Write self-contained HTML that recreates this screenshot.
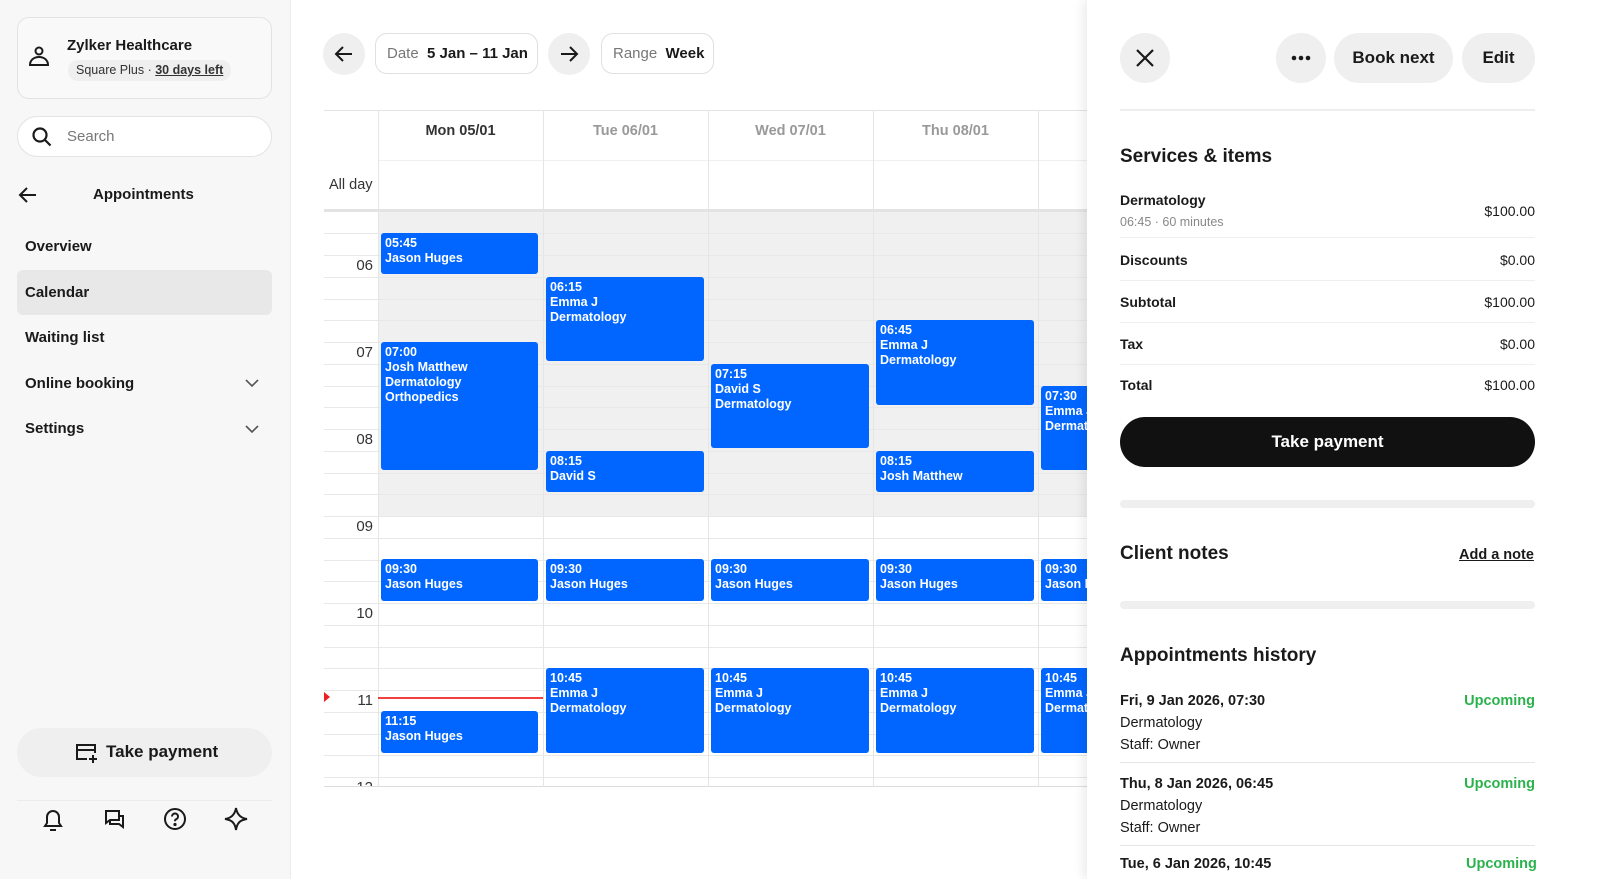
<!DOCTYPE html>
<html><head><meta charset="utf-8"><style>
*{box-sizing:border-box;margin:0;padding:0}
body{width:1600px;height:879px;overflow:hidden;font-family:"Liberation Sans",sans-serif;color:#1a1a1a;background:#fff;position:relative}
.abs{position:absolute}
.side{left:0;top:0;width:291px;height:879px;background:#f7f7f7;border-right:1px solid #ececec}
.card{left:17px;top:17px;width:255px;height:82px;border:1px solid #e3e3e3;border-radius:12px;background:#f9f9f9}
.nav{left:25px;font-size:15px;font-weight:bold;color:#1a1a1a}
.blk{position:absolute;background:#0066ff;color:#fff;border-radius:3px;font-size:12.5px;font-weight:bold;line-height:15px;padding:3px 4px;overflow:hidden;white-space:nowrap}
.hl{position:absolute;height:1px;background:#e8e8e8}
.lbl{position:absolute;left:324px;width:49px;text-align:right;font-size:15px;color:#333}
.dh{position:absolute;top:123px;width:165px;text-align:center;font-size:14.5px;font-weight:bold;color:#999}
.pill{position:absolute;border:1px solid #e0e0e0;border-radius:12px;height:41px;top:33px;font-size:15px;line-height:39px;padding:0 11px;white-space:nowrap}
.circ{position:absolute;border-radius:50%;background:#efefef}
.row{position:absolute;left:1120px;width:415px;font-size:14px;border-bottom:1px solid #efefef}
.row b{position:absolute;left:0}
.row span{position:absolute;right:0}
</style></head><body>

<div class="abs side"></div>
<div class="abs card"></div>
<svg class="abs" style="left:27px;top:44px" width="24" height="26" viewBox="0 0 24 26" fill="none" stroke="#1a1a1a" stroke-width="2"><circle cx="12" cy="7" r="3.5"/><path d="M3 21c0-5 4-8 9-8s9 3 9 8H3z"/></svg>
<div class="abs" style="left:67px;top:37px;font-size:15px;font-weight:bold">Zylker Healthcare</div>
<div class="abs" style="left:68px;top:60px;height:21px;padding:0 8px;background:#efefef;border-radius:10px;font-size:12.5px;line-height:21px;color:#333;white-space:nowrap">Square Plus · <u style="font-weight:bold">30 days left</u></div>
<div class="abs" style="left:17px;top:116px;width:255px;height:41px;border:1px solid #e3e3e3;border-radius:21px;background:#fff"></div>
<svg class="abs" style="left:31px;top:126px" width="22" height="22" viewBox="0 0 22 22" fill="none" stroke="#1a1a1a" stroke-width="2.2"><circle cx="9" cy="9" r="6.5"/><path d="M14 14l5.5 5.5"/></svg>
<div class="abs" style="left:67px;top:128px;font-size:15px;color:#777">Search</div>
<svg class="abs" style="left:18px;top:185px" width="20" height="20" viewBox="0 0 20 20" fill="none" stroke="#1a1a1a" stroke-width="2"><path d="M18 10H3M9 3l-7 7 7 7"/></svg>
<div class="abs" style="left:93px;top:186px;font-size:15px;font-weight:bold">Appointments</div>
<div class="abs" style="left:17px;top:270px;width:255px;height:45px;background:#e8e8e8;border-radius:6px"></div>
<div class="abs nav" style="top:238px">Overview</div>
<div class="abs nav" style="top:284px">Calendar</div>
<div class="abs nav" style="top:329px">Waiting list</div>
<div class="abs nav" style="top:375px">Online booking</div>
<div class="abs nav" style="top:420px">Settings</div>
<svg class="abs" style="left:244px;top:377px" width="16" height="12" viewBox="0 0 16 12" fill="none" stroke="#555" stroke-width="1.6"><path d="M2 3l6 6 6-6"/></svg>
<svg class="abs" style="left:244px;top:423px" width="16" height="12" viewBox="0 0 16 12" fill="none" stroke="#555" stroke-width="1.6"><path d="M2 3l6 6 6-6"/></svg>
<div class="abs" style="left:17px;top:728px;width:255px;height:49px;background:#efefef;border-radius:25px"></div>
<svg class="abs" style="left:74px;top:741px" width="24" height="24" viewBox="0 0 24 24" fill="none" stroke="#1a1a1a" stroke-width="2"><path d="M13 18H3V4h18v8M3 9h18M19 14v8M15 18h8"/></svg>
<div class="abs" style="left:106px;top:742px;font-size:17px;font-weight:bold">Take payment</div>
<div class="abs" style="left:17px;top:800px;width:255px;height:1px;background:#ececec"></div>
<svg class="abs" style="left:41px;top:807px" width="24" height="26" viewBox="0 0 24 26" fill="none" stroke="#1a1a1a" stroke-width="2"><path d="M4 19h16l-2-3V10a6 6 0 0 0-12 0v6zM9 23h6"/></svg>
<svg class="abs" style="left:101px;top:807px" width="26" height="26" viewBox="0 0 26 26" fill="none" stroke="#1a1a1a" stroke-width="2"><path d="M4 4h14v9H9l-4 3V4zM9 13v4h9l4 3v-11h-4"/></svg>
<svg class="abs" style="left:163px;top:807px" width="24" height="24" viewBox="0 0 24 24" fill="none" stroke="#1a1a1a" stroke-width="2"><circle cx="12" cy="12" r="10"/><path d="M9 9.5a3 3 0 1 1 4 2.8c-.8.4-1 1-1 2"/><circle cx="12" cy="17.5" r=".6" fill="#1a1a1a"/></svg>
<svg class="abs" style="left:224px;top:807px" width="24" height="24" viewBox="0 0 24 24" fill="none" stroke="#1a1a1a" stroke-width="2"><path d="M12 1c1 6 4 10 11 11-7 1-10 4-11 11-1-7-4-10-11-11 7-1 10-5 11-11z"/></svg>

<!-- top bar -->
<div class="circ" style="left:323px;top:33px;width:42px;height:42px"></div>
<svg class="abs" style="left:334px;top:44px" width="20" height="20" viewBox="0 0 20 20" fill="none" stroke="#1a1a1a" stroke-width="2"><path d="M18 10H3M9 3l-7 7 7 7"/></svg>
<div class="pill" style="left:375px;width:163px"><span style="color:#777">Date</span>&nbsp; <b>5 Jan – 11 Jan</b></div>
<div class="circ" style="left:548px;top:33px;width:42px;height:42px"></div>
<svg class="abs" style="left:559px;top:44px" width="20" height="20" viewBox="0 0 20 20" fill="none" stroke="#1a1a1a" stroke-width="2"><path d="M2 10h15M11 3l7 7-7 7"/></svg>
<div class="pill" style="left:601px;width:113px"><span style="color:#777">Range</span>&nbsp; <b>Week</b></div>

<!-- calendar -->
<div class="abs" style="left:378px;top:212px;width:720px;height:304px;background:#f0f0f0"></div>
<div class="hl" style="left:324px;top:110px;width:770px;background:#e3e3e3"></div>
<div class="hl" style="left:378px;top:160px;width:720px;background:#f0f0f0"></div>
<div class="abs" style="left:324px;top:209px;width:770px;height:3px;background:#e3e3e3"></div>
<div class="hl" style="left:324px;top:786px;width:770px;background:#ddd"></div>
<div style="position:absolute;left:324px;top:0">
<div class="hl" style="left:0;top:233px;width:770px"></div><div class="hl" style="left:0;top:255px;width:770px"></div><div class="hl" style="left:0;top:277px;width:770px"></div><div class="hl" style="left:0;top:299px;width:770px"></div><div class="hl" style="left:0;top:320px;width:770px"></div><div class="hl" style="left:0;top:342px;width:770px"></div><div class="hl" style="left:0;top:364px;width:770px"></div><div class="hl" style="left:0;top:386px;width:770px"></div><div class="hl" style="left:0;top:407px;width:770px"></div><div class="hl" style="left:0;top:429px;width:770px"></div><div class="hl" style="left:0;top:451px;width:770px"></div><div class="hl" style="left:0;top:473px;width:770px"></div><div class="hl" style="left:0;top:494px;width:770px"></div><div class="hl" style="left:0;top:516px;width:770px"></div><div class="hl" style="left:0;top:538px;width:770px"></div><div class="hl" style="left:0;top:560px;width:770px"></div><div class="hl" style="left:0;top:581px;width:770px"></div><div class="hl" style="left:0;top:603px;width:770px"></div><div class="hl" style="left:0;top:625px;width:770px"></div><div class="hl" style="left:0;top:647px;width:770px"></div><div class="hl" style="left:0;top:668px;width:770px"></div><div class="hl" style="left:0;top:690px;width:770px"></div><div class="hl" style="left:0;top:712px;width:770px"></div><div class="hl" style="left:0;top:734px;width:770px"></div><div class="hl" style="left:0;top:755px;width:770px"></div><div class="hl" style="left:0;top:777px;width:770px"></div>
</div>
<div class="abs" style="left:378px;top:110px;width:1px;height:677px;background:#e5e5e5"></div>
<div class="abs" style="left:543px;top:110px;width:1px;height:677px;background:#e5e5e5"></div>
<div class="abs" style="left:708px;top:110px;width:1px;height:677px;background:#e5e5e5"></div>
<div class="abs" style="left:873px;top:110px;width:1px;height:677px;background:#e5e5e5"></div>
<div class="abs" style="left:1038px;top:110px;width:1px;height:677px;background:#e5e5e5"></div>
<div class="dh" style="left:378px;color:#333">Mon 05/01</div>
<div class="dh" style="left:543px">Tue 06/01</div>
<div class="dh" style="left:708px">Wed 07/01</div>
<div class="dh" style="left:873px">Thu 08/01</div>
<div class="abs" style="left:329px;top:177px;font-size:14.5px;color:#333">All day</div>
<div class="lbl" style="top:257px">06</div>
<div class="lbl" style="top:344px">07</div>
<div class="lbl" style="top:431px">08</div>
<div class="lbl" style="top:518px">09</div>
<div class="lbl" style="top:605px">10</div>
<div class="lbl" style="top:692px">11</div>
<div class="lbl" style="top:779px;height:7px;overflow:hidden">12</div>
<div class="abs" style="left:378px;top:697px;width:165px;height:1.5px;background:#f04040"></div>
<div class="abs" style="left:324px;top:692px;width:0;height:0;border-top:5px solid transparent;border-bottom:5px solid transparent;border-left:6px solid #f02020"></div>

<div class="blk" style="left:381px;top:233px;width:157px;height:41px">05:45<br>Jason Huges</div>
<div class="blk" style="left:381px;top:342px;width:157px;height:128px">07:00<br>Josh Matthew<br>Dermatology<br>Orthopedics</div>
<div class="blk" style="left:381px;top:559px;width:157px;height:42px">09:30<br>Jason Huges</div>
<div class="blk" style="left:381px;top:711px;width:157px;height:42px">11:15<br>Jason Huges</div>
<div class="blk" style="left:546px;top:277px;width:158px;height:84px">06:15<br>Emma J<br>Dermatology</div>
<div class="blk" style="left:546px;top:451px;width:158px;height:41px">08:15<br>David S</div>
<div class="blk" style="left:546px;top:559px;width:158px;height:42px">09:30<br>Jason Huges</div>
<div class="blk" style="left:546px;top:668px;width:158px;height:85px">10:45<br>Emma J<br>Dermatology</div>
<div class="blk" style="left:711px;top:364px;width:158px;height:84px">07:15<br>David S<br>Dermatology</div>
<div class="blk" style="left:711px;top:559px;width:158px;height:42px">09:30<br>Jason Huges</div>
<div class="blk" style="left:711px;top:668px;width:158px;height:85px">10:45<br>Emma J<br>Dermatology</div>
<div class="blk" style="left:876px;top:320px;width:158px;height:85px">06:45<br>Emma J<br>Dermatology</div>
<div class="blk" style="left:876px;top:451px;width:158px;height:41px">08:15<br>Josh Matthew</div>
<div class="blk" style="left:876px;top:559px;width:158px;height:42px">09:30<br>Jason Huges</div>
<div class="blk" style="left:876px;top:668px;width:158px;height:85px">10:45<br>Emma J<br>Dermatology</div>
<div class="blk" style="left:1041px;top:386px;width:158px;height:84px">07:30<br>Emma J<br>Dermatology</div>
<div class="blk" style="left:1041px;top:559px;width:158px;height:42px">09:30<br>Jason Huges</div>
<div class="blk" style="left:1041px;top:668px;width:158px;height:85px">10:45<br>Emma J<br>Dermatology</div>

<!-- panel -->
<div class="abs" style="left:1087px;top:0;width:513px;height:879px;background:#fff;box-shadow:-4px 0 10px rgba(0,0,0,.08)"></div>
<div class="circ" style="left:1120px;top:33px;width:50px;height:50px"></div>
<svg class="abs" style="left:1134px;top:47px" width="22" height="22" viewBox="0 0 22 22" fill="none" stroke="#1a1a1a" stroke-width="2.2"><path d="M3 3l16 16M19 3L3 19"/></svg>
<div class="circ" style="left:1276px;top:33px;width:50px;height:50px"></div>
<svg class="abs" style="left:1289px;top:54px" width="24" height="8" viewBox="0 0 24 8" fill="#1a1a1a"><circle cx="5" cy="4" r="2.3"/><circle cx="12" cy="4" r="2.3"/><circle cx="19" cy="4" r="2.3"/></svg>
<div class="abs" style="left:1334px;top:33px;width:119px;height:50px;border-radius:25px;background:#efefef;text-align:center;line-height:50px;font-size:17px;font-weight:bold">Book next</div>
<div class="abs" style="left:1462px;top:33px;width:73px;height:50px;border-radius:25px;background:#efefef;text-align:center;line-height:50px;font-size:17px;font-weight:bold">Edit</div>
<div class="abs" style="left:1120px;top:109px;width:415px;height:2px;background:#eee"></div>
<div class="abs" style="left:1120px;top:146px;font-size:19px;font-weight:bold">Services &amp; items</div>
<div class="row" style="top:190px;height:48px"><b style="top:2px">Dermatology</b><div style="position:absolute;top:25px;font-size:12.5px;color:#888">06:45 · 60 minutes</div><span style="top:13px">$100.00</span></div>
<div class="row" style="top:238px;height:43px"><b style="top:14px">Discounts</b><span style="top:14px">$0.00</span></div>
<div class="row" style="top:281px;height:42px"><b style="top:13px">Subtotal</b><span style="top:13px">$100.00</span></div>
<div class="row" style="top:323px;height:42px"><b style="top:13px">Tax</b><span style="top:13px">$0.00</span></div>
<div class="row" style="top:365px;height:42px;border:none"><b style="top:12px">Total</b><span style="top:12px">$100.00</span></div>
<div class="abs" style="left:1120px;top:417px;width:415px;height:50px;border-radius:25px;background:#111;color:#fff;text-align:center;line-height:50px;font-size:17px;font-weight:bold">Take payment</div>
<div class="abs" style="left:1120px;top:500px;width:415px;height:8px;border-radius:4px;background:#efefef"></div>
<div class="abs" style="left:1120px;top:543px;font-size:19px;font-weight:bold">Client notes</div>
<div class="abs" style="left:1459px;top:547px;font-size:14.5px;font-weight:bold;text-decoration:underline">Add a note</div>
<div class="abs" style="left:1120px;top:601px;width:415px;height:8px;border-radius:4px;background:#efefef"></div>
<div class="abs" style="left:1120px;top:645px;font-size:19px;font-weight:bold">Appointments history</div>
<div class="abs" style="left:1120px;top:690px;width:415px;height:73px;border-bottom:1px solid #e5e5e5;font-size:14.5px;line-height:22px">
<b>Fri, 9 Jan 2026, 07:30</b><br>Dermatology<br>Staff: Owner
<span style="position:absolute;right:0;top:0;color:#2bb24c;font-weight:bold">Upcoming</span></div>
<div class="abs" style="left:1120px;top:773px;width:415px;height:73px;border-bottom:1px solid #e5e5e5;font-size:14.5px;line-height:22px">
<b>Thu, 8 Jan 2026, 06:45</b><br>Dermatology<br>Staff: Owner
<span style="position:absolute;right:0;top:0;color:#2bb24c;font-weight:bold">Upcoming</span></div>
<div class="abs" style="left:1120px;top:856px;font-size:14.5px;font-weight:bold">Tue, 6 Jan 2026, 10:45</div>
<div class="abs" style="left:1466px;top:856px;font-size:14.5px;font-weight:bold;color:#2bb24c">Upcoming</div>
</body></html>
